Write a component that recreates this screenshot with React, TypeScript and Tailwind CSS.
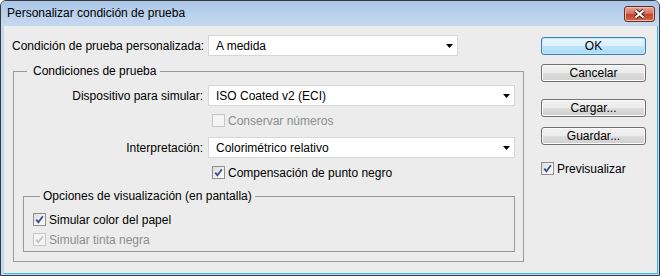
import clsx from "clsx";

const Check = ({ checked, disabled }: { checked?: boolean; disabled?: boolean }) => (
  <span
    className={clsx(
      "flex h-[13px] w-[13px] shrink-0 items-center justify-center border",
      disabled
        ? "border-[#c6c6c6] bg-[#f5f5f5]"
        : "border-[#8e8f8f] bg-[linear-gradient(135deg,#dcdcdc,#f4f4f4_60%,#ffffff)]"
    )}
  >
    {checked && (
      <svg width="11" height="11" viewBox="0 0 11 11">
        <path
          d="M2.2 5.6 L4.4 8.2 L8.9 2.2"
          fill="none"
          stroke={disabled ? "#c4c4c4" : "#3c4f8f"}
          strokeWidth="1.8"
        />
      </svg>
    )}
  </span>
);

const Select = ({ value, className }: { value: string; className: string }) => (
  <div
    className={clsx(
      "flex h-[21px] shrink-0 items-center justify-between border border-[#d7d7d7] bg-white pl-[7px] pr-[4px]",
      className
    )}
  >
    <span className="whitespace-nowrap">{value}</span>
    <svg width="7" height="4" viewBox="0 0 7 4">
      <path d="M0 0H7L3.5 4Z" fill="#000" />
    </svg>
  </div>
);

const Button = ({ label, primary, className }: { label: string; primary?: boolean; className: string }) => (
  <button
    type="button"
    className={clsx(
      "h-[18px] w-[105px] rounded-[3px] border text-[12px] leading-[16px] text-black",
      primary
        ? "border-[#3c7fb1] bg-[linear-gradient(#eaf6fd_0%,#d9f0fc_49%,#bee6fd_50%,#a7d9f5_100%)] shadow-[inset_0_0_0_1px_#c3e6fa]"
        : "border-[#707070] bg-[linear-gradient(#f2f2f2_0%,#ebebeb_49%,#dddddd_50%,#cfcfcf_100%)] shadow-[inset_0_0_0_1px_#fbfbfb]",
      className
    )}
  >
    {label}
  </button>
);

const App = () => {
  return (
    <div className="h-[276px] w-[660px] overflow-hidden bg-white">
      <div className="flex h-[276px] w-[660px] flex-col rounded-t-[6px] border border-[#3a3a3a] bg-[#c4d9f0] font-['Liberation_Sans',Arial,sans-serif] text-[12px] text-black">
        {/* title bar */}
        <div className="flex h-[25px] shrink-0 items-center justify-between rounded-t-[5px] bg-[linear-gradient(#a9c5e6,#bcd3ed_60%,#c4d9f0)] pl-[6px] pr-[4px]">
          <span className="leading-[15px]">Personalizar condición de prueba</span>
          <div className="flex h-[16px] w-[31px] items-center justify-center rounded-[3px] border border-[#6d2a20] bg-[linear-gradient(#e6a898,#d47361_45%,#c2442b_55%,#d06a4d)] shadow-[inset_0_0_0_1px_#eebcae]">
            <svg width="13" height="10" viewBox="0 0 13 10">
              <path d="M2.5 1.5 L10.5 8.5 M10.5 1.5 L2.5 8.5" stroke="#3b1e18" strokeWidth="4" />
              <path d="M2.5 1.5 L10.5 8.5 M10.5 1.5 L2.5 8.5" stroke="#ffffff" strokeWidth="2.2" />
            </svg>
          </div>
        </div>

        {/* client area */}
        <div className="mb-[1px] ml-[3px] flex w-[654px] flex-1 border-r border-b border-[#2fb9ea] bg-[#ececec] pl-[8px]">
          <div className="flex w-[512px] flex-col">
            <div className="mt-[9px] flex h-[21px] items-center">
              <span className="w-[191px] whitespace-nowrap text-right">Condición de prueba personalizada:</span>
              <Select className="ml-[5px] w-[250px]" value="A medida" />
            </div>

            <fieldset className="ml-[1px] mt-[8px] w-[511px] border border-[#9a9a9a] pb-[9px]">
              <legend className="ml-[13px] pl-[6px] pr-[4px] leading-[14px]">Condiciones de prueba</legend>

              <div className="mt-[7px] flex h-[21px] items-center">
                <span className="w-[189px] whitespace-nowrap text-right">Dispositivo para simular:</span>
                <Select className="ml-[5px] w-[307px]" value="ISO Coated v2 (ECI)" />
              </div>

              <div className="ml-[198px] mt-[8px] flex h-[13px] items-center gap-[3px] text-[#8d8d8d]">
                <Check disabled />
                <span className="whitespace-nowrap">Conservar números</span>
              </div>

              <div className="mt-[10px] flex h-[21px] items-center">
                <span className="w-[189px] whitespace-nowrap text-right">Interpretación:</span>
                <Select className="ml-[5px] w-[307px]" value="Colorimétrico relativo" />
              </div>

              <div className="ml-[198px] mt-[8px] flex h-[13px] items-center gap-[3px]">
                <Check checked />
                <span className="whitespace-nowrap">Compensación de punto negro</span>
              </div>

              <fieldset className="ml-[9px] mt-[10px] w-[492px] border border-[#9a9a9a] pb-[5px]">
                <legend className="ml-[16px] pl-[3px] pr-[3px] leading-[14px]">
                  Opciones de visualización (en pantalla)
                </legend>
                <div className="ml-[9px] mt-[10px] flex h-[13px] items-center gap-[3px]">
                  <Check checked />
                  <span className="whitespace-nowrap">Simular color del papel</span>
                </div>
                <div className="ml-[9px] mt-[7px] flex h-[13px] items-center gap-[3px] text-[#8d8d8d]">
                  <Check checked disabled />
                  <span className="whitespace-nowrap">Simular tinta negra</span>
                </div>
              </fieldset>
            </fieldset>
          </div>

          <div className="ml-[17px] flex w-[105px] flex-col">
            <Button className="mt-[11px]" label="OK" primary />
            <Button className="mt-[9px]" label="Cancelar" />
            <Button className="mt-[17px]" label="Cargar..." />
            <Button className="mt-[10px]" label="Guardar..." />
            <div className="mt-[17px] flex h-[13px] items-center gap-[3px]">
              <Check checked />
              <span className="whitespace-nowrap">Previsualizar</span>
            </div>
          </div>
        </div>
      </div>
    </div>
  );
};

export default App;
